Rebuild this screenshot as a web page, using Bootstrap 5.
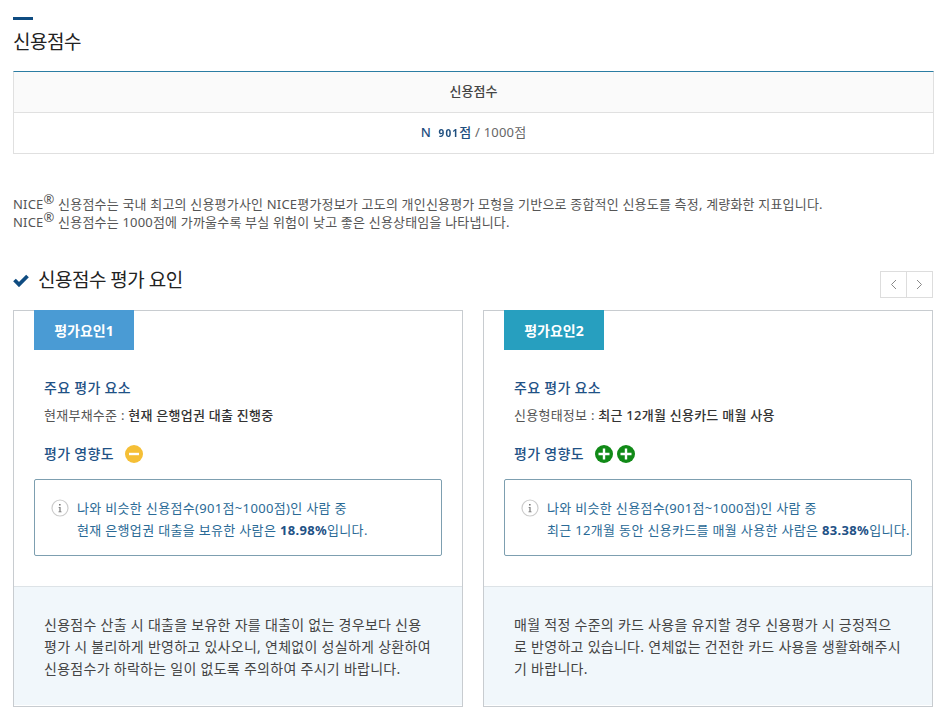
<!DOCTYPE html>
<html lang="ko">
  <head>
    <meta charset="UTF-8" />
    <meta name="viewport" content="width=device-width, initial-scale=1.0" />
    <title>신용점수</title>
    <link rel="stylesheet" href="https://cdn.jsdelivr.net/npm/bootstrap@5.3.0/dist/css/bootstrap.min.css" />
    <style>
      body {
        font-family: "Noto Sans", "Noto Sans CJK KR", sans-serif;
        font-size: 13px;
        color: #555;
        background: #fff;
        overflow: hidden;
      }
      .page-wrap {
        width: 921px;
        margin-left: 13px;
        padding-top: 17px;
      }
      .title-bar {
        width: 20px;
        height: 3px;
        background: #0f4c81;
      }
      .page-title {
        font-size: 19px;
        line-height: 28px;
        font-weight: 400;
        color: #222;
        letter-spacing: -0.45px;
        margin: 8px 0 15px;
      }
      .score-head {
        height: 42px;
        background: #fafafa;
        border-top: 1px solid #2b7da3;
        border-bottom: 1px solid #e0e0e0;
        border-left: 1px solid #e0e0e0;
        border-right: 1px solid #e0e0e0;
        font-weight: 500;
        color: #444;
      }
      .score-body {
        height: 41px;
        border: 1px solid #e0e0e0;
        border-top: 0;
        color: #666;
        letter-spacing: 0.2px;
      }
      .score-val {
        color: #1f4f7f;
        font-weight: 500;
      }
      .score-mask {
        font-size: 10px;
        font-weight: 700;
        letter-spacing: 1.2px;
        margin-left: 4px;
        filter: blur(0.5px);
      }
      .intro-text {
        margin: 41px 0 0;
        line-height: 18px;
        color: #555;
        letter-spacing: 0.19px;
      }
      .intro-text sup {
        font-size: 13px;
        top: -0.35em;
        line-height: 0;
      }
      .section-head {
        margin-top: 31px;
        height: 36px;
      }
      .section-title {
        font-size: 19px;
        font-weight: 400;
        line-height: 26px;
        color: #222;
        letter-spacing: -0.5px;
        margin: 0 0 0 1px;
      }
      .pager-box {
        margin-right: 1px;
      }
      .pager-btn {
        width: 27px;
        height: 27px;
        background: #fff;
        border: 1px solid #ddd;
        padding: 0;
      }
      .pager-btn + .pager-btn {
        margin-left: -1px;
      }
      .factor-row {
        gap: 20px;
        margin-top: 12px;
      }
      .factor-box {
        width: 450px;
        height: 397px;
        border: 1px solid #c8ccd0;
      }
      .factor-top {
        height: 276px;
        padding: 0 20px;
      }
      .factor-tag {
        width: 100px;
        height: 40px;
        margin-top: -1px;
        color: #fff;
        font-weight: 700;
        font-size: 14px;
      }
      .tag-blue {
        background: #4a9bd4;
      }
      .tag-teal {
        background: #279fbf;
      }
      .factor-label {
        font-size: 14px;
        font-weight: 500;
        color: #1f5286;
        line-height: 20px;
        letter-spacing: 0.3px;
        padding-left: 10px;
        margin: 0;
      }
      .label-first {
        margin-top: 28px;
      }
      .factor-desc {
        line-height: 18px;
        letter-spacing: 0.25px;
        padding-left: 10px;
        margin: 8px 0 0;
      }
      .factor-desc strong {
        font-weight: 500;
        color: #333;
      }
      .impact-row {
        margin-top: 20px;
        height: 20px;
        padding-left: 10px;
      }
      .impact-row .factor-label {
        padding-left: 0;
        margin-right: 11px;
      }
      .impact-icons {
        gap: 4px;
      }
      .note-box {
        height: 77px;
        margin-top: 15px;
        border: 1px solid #7d9fb0;
        border-radius: 2px;
        padding: 17px 0 0 16px;
        color: #2a6a96;
        line-height: 22px;
        letter-spacing: 0.33px;
        white-space: nowrap;
      }
      .note-box strong {
        font-weight: 700;
        color: #1f5286;
      }
      .note-icon {
        margin: 2px 8px 0 0;
        flex: none;
      }
      .factor-foot {
        height: 119px;
        background: #f1f7fb;
        border-top: 1px solid #dde3e7;
        padding: 27px 30px 0;
        color: #444;
        font-size: 14px;
        line-height: 22px;
        letter-spacing: 0.28px;
        word-break: break-all;
      }
    </style>
  </head>
  <body>
    <div class="page-wrap">
      <div class="title-bar"></div>
      <h1 class="page-title">신용점수</h1>

      <div class="score-head d-flex align-items-center justify-content-center">신용점수</div>
      <div class="score-body d-flex align-items-center justify-content-center">
        <span class="score-val">N <span class="score-mask">901</span>점</span>&nbsp;/ 1000점
      </div>

      <p class="intro-text">
        NICE<sup>®</sup> 신용점수는 국내 최고의 신용평가사인 NICE평가정보가 고도의 개인신용평가 모형을 기반으로 종합적인 신용도를 측정, 계량화한 지표입니다.<br />
        NICE<sup>®</sup> 신용점수는 1000점에 가까울수록 부실 위험이 낮고 좋은 신용상태임을 나타냅니다.
      </p>

      <div class="section-head d-flex align-items-center justify-content-between">
        <div class="d-flex align-items-center gap-2">
          <svg width="16" height="13" viewBox="0 0 16 13"><path d="M1.5 6 L6 10.5 L14.5 2" fill="none" stroke="#0f4c81" stroke-width="3.8" /></svg>
          <h2 class="section-title">신용점수 평가 요인</h2>
        </div>
        <div class="pager-box d-flex mt-2">
          <button class="pager-btn d-flex align-items-center justify-content-center" type="button" aria-label="이전">
            <svg width="7" height="11" viewBox="0 0 7 11"><path d="M6 1 L1.5 5.5 L6 10" fill="none" stroke="#888" /></svg>
          </button>
          <button class="pager-btn d-flex align-items-center justify-content-center" type="button" aria-label="다음">
            <svg width="7" height="11" viewBox="0 0 7 11"><path d="M1 1 L5.5 5.5 L1 10" fill="none" stroke="#888" /></svg>
          </button>
        </div>
      </div>

      <div class="factor-row d-flex">
        <div class="factor-box">
          <div class="factor-top">
            <div class="factor-tag tag-blue d-flex align-items-center justify-content-center">평가요인1</div>
            <p class="factor-label label-first">주요 평가 요소</p>
            <p class="factor-desc">현재부채수준 : <strong>현재 은행업권 대출 진행중</strong></p>
            <div class="impact-row d-flex align-items-center">
              <p class="factor-label">평가 영향도</p>
              <div class="impact-icons d-flex">
                <svg width="18" height="18" viewBox="0 0 18 18"><circle cx="9" cy="9" r="9" fill="#f5bf36" /><rect x="4" y="7.8" width="10" height="2.4" fill="#fff" /></svg>
              </div>
            </div>
            <div class="note-box d-flex">
              <svg class="note-icon" width="18" height="18" viewBox="0 0 18 18"><circle cx="9" cy="9" r="8" fill="#fff" stroke="#ccc" stroke-width="1.2" /><path d="M8 5h1.6v1.5H8zM7.6 8h2v4.4h1v.8H7.4v-.8h1V8.8h-.8z" fill="#777" /></svg>
              <div>나와 비슷한 신용점수(901점~1000점)인 사람 중<br />현재 은행업권 대출을 보유한 사람은 <strong>18.98%</strong>입니다.</div>
            </div>
          </div>
          <div class="factor-foot">신용점수 산출 시 대출을 보유한 자를 대출이 없는 경우보다 신용평가 시 불리하게 반영하고 있사오니, 연체없이 성실하게 상환하여 신용점수가 하락하는 일이 없도록 주의하여 주시기 바랍니다.</div>
        </div>

        <div class="factor-box">
          <div class="factor-top">
            <div class="factor-tag tag-teal d-flex align-items-center justify-content-center">평가요인2</div>
            <p class="factor-label label-first">주요 평가 요소</p>
            <p class="factor-desc">신용형태정보 : <strong>최근 12개월 신용카드 매월 사용</strong></p>
            <div class="impact-row d-flex align-items-center">
              <p class="factor-label">평가 영향도</p>
              <div class="impact-icons d-flex">
                <svg width="18" height="18" viewBox="0 0 18 18"><circle cx="9" cy="9" r="9" fill="#118a17" /><path d="M7.8 3.5h2.4v4.3h4.3v2.4h-4.3v4.3H7.8v-4.3H3.5V7.8h4.3z" fill="#fff" /></svg>
                <svg width="18" height="18" viewBox="0 0 18 18"><circle cx="9" cy="9" r="9" fill="#118a17" /><path d="M7.8 3.5h2.4v4.3h4.3v2.4h-4.3v4.3H7.8v-4.3H3.5V7.8h4.3z" fill="#fff" /></svg>
              </div>
            </div>
            <div class="note-box d-flex">
              <svg class="note-icon" width="18" height="18" viewBox="0 0 18 18"><circle cx="9" cy="9" r="8" fill="#fff" stroke="#ccc" stroke-width="1.2" /><path d="M8 5h1.6v1.5H8zM7.6 8h2v4.4h1v.8H7.4v-.8h1V8.8h-.8z" fill="#777" /></svg>
              <div>나와 비슷한 신용점수(901점~1000점)인 사람 중<br />최근 12개월 동안 신용카드를 매월 사용한 사람은 <strong>83.38%</strong>입니다.</div>
            </div>
          </div>
          <div class="factor-foot">매월 적정 수준의 카드 사용을 유지할 경우 신용평가 시 긍정적으로 반영하고 있습니다. 연체없는 건전한 카드 사용을 생활화해주시기 바랍니다.</div>
        </div>
      </div>
    </div>
    <script src="https://cdn.jsdelivr.net/npm/bootstrap@5.3.0/dist/js/bootstrap.bundle.min.js"></script>
  </body>
</html>
